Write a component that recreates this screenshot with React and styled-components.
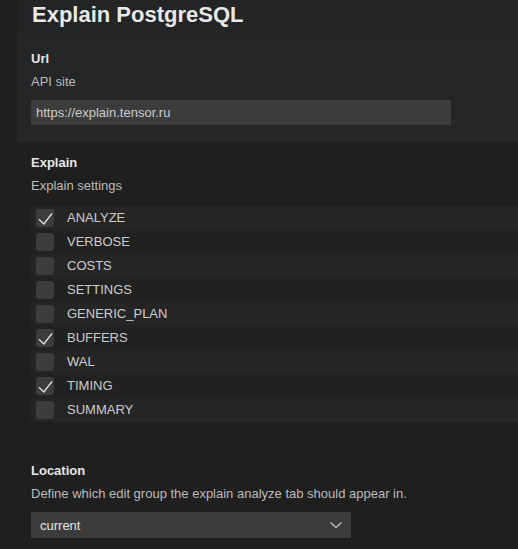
import styled, { createGlobalStyle } from "styled-components";

const GlobalStyle = createGlobalStyle`
  body {
    margin: 0;
    background: #1f1f1f;
    font-family: "Liberation Sans", Arial, sans-serif;
    font-size: 13px;
    color: #cccccc;
  }
`;

const Page = styled.div`
  width: 518px;
  height: 549px;
  overflow: hidden;
`;

const Header = styled.div`
  margin-left: 17px;
  height: 38px;
  box-sizing: border-box;
  padding: 2px 0 0 15px;
  background: #232425;
`;

const Title = styled.h1`
  margin: 0;
  font-size: 22px;
  font-weight: 700;
  line-height: normal;
  color: #e8e8e8;
`;

const Section = styled.section`
  margin-left: ${(p) => (p.$panel ? "17px" : "0")};
  padding: ${(p) => p.$pad};
  background: ${(p) => (p.$panel ? "#252627" : "transparent")};
`;

const Heading = styled.div`
  font-weight: 700;
  line-height: 18px;
  color: #e7e7e7;
`;

const Description = styled.div`
  margin-top: 5px;
  line-height: 18px;
  color: #bbbbbb;
`;

const TextInput = styled.div`
  margin-top: 9px;
  width: 420px;
  height: 25px;
  box-sizing: border-box;
  padding-left: 5px;
  line-height: 25px;
  background: #3c3c3c;
  color: #cccccc;
`;

const List = styled.div`
  margin-top: 11px;
  display: flex;
  flex-direction: column;
`;

const Row = styled.div`
  display: flex;
  align-items: center;
  height: 24px;
  padding-left: 5px;
  background: ${(p) => (p.$odd ? "#252525" : "#212121")};
`;

const Box = styled.span`
  display: flex;
  align-items: center;
  justify-content: center;
  width: 18px;
  height: 18px;
  border-radius: 3px;
  background: #3c3c3c;
`;

const Label = styled.span`
  margin-left: 13px;
  line-height: 24px;
  color: #cccccc;
`;

const Select = styled.div`
  margin-top: 9px;
  width: 320px;
  height: 26px;
  box-sizing: border-box;
  padding: 0 8px 0 9px;
  display: flex;
  align-items: center;
  justify-content: space-between;
  background: #3c3c3c;
  color: #e2e2e2;
`;

const options = [
  ["ANALYZE", true],
  ["VERBOSE", false],
  ["COSTS", false],
  ["SETTINGS", false],
  ["GENERIC_PLAN", false],
  ["BUFFERS", true],
  ["WAL", false],
  ["TIMING", true],
  ["SUMMARY", false],
];

function Check() {
  return (
    <svg width="18" height="18" viewBox="0 0 18 18">
      <path d="M3 10.2 L7.8 15 L16 4.5" fill="none" stroke="#e4e4e4" strokeWidth="1.3" />
    </svg>
  );
}

function Chevron() {
  return (
    <svg width="14" height="8" viewBox="0 0 14 8">
      <path d="M1.5 1.5 L7 6.5 L12.5 1.5" fill="none" stroke="#c8c8c8" strokeWidth="1.2" />
    </svg>
  );
}

export default function App() {
  return (
    <Page>
      <GlobalStyle />
      <Header>
        <Title>Explain PostgreSQL</Title>
      </Header>
      <Section $panel $pad="12px 0 17px 14px">
        <Heading>Url</Heading>
        <Description>API site</Description>
        <TextInput>https://explain.tensor.ru</TextInput>
      </Section>
      <Section $pad="12px 0 0 31px">
        <Heading>Explain</Heading>
        <Description>Explain settings</Description>
        <List>
          {options.map(([name, on], i) => (
            <Row key={name} $odd={i % 2 === 0}>
              <Box>{on && <Check />}</Box>
              <Label>{name}</Label>
            </Row>
          ))}
        </List>
      </Section>
      <Section $pad="40px 0 0 31px">
        <Heading>Location</Heading>
        <Description>Define which edit group the explain analyze tab should appear in.</Description>
        <Select>
          <span>current</span>
          <Chevron />
        </Select>
      </Section>
    </Page>
  );
}
